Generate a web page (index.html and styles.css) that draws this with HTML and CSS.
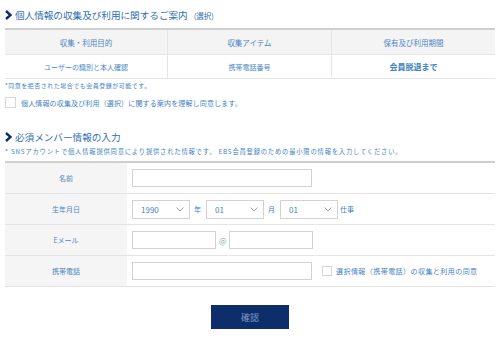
FILE: index.html
```html
<!DOCTYPE html>
<html lang="ja">
<head>
<meta charset="utf-8">
<link rel="stylesheet" href="styles.css">
</head>
<body>
<div class="page">
  <h2 class="sec-title first">
    <svg class="arrow" width="7" height="10" viewBox="0 0 7 10"><path d="M1 1 L5.5 5 L1 9" fill="none" stroke="#0d2e6b" stroke-width="2.4"/></svg>
    <span>個人情報の収集及び利用に関するご案内</span><small>(選択)</small>
  </h2>
  <div class="info-table">
    <div class="cell head">収集・利用目的</div>
    <div class="cell head">収集アイテム</div>
    <div class="cell head">保有及び利用期間</div>
    <div class="cell">ユーザーの識別と本人確認</div>
    <div class="cell">携帯電話番号</div>
    <div class="cell strong">会員脱退まで</div>
  </div>
  <p class="note n1">*同意を拒否された場合でも会員登録が可能です。</p>
  <label class="agree"><span class="box"></span><span>個人情報の収集及び利用（選択）に関する案内を理解し同意します。</span></label>

  <h2 class="sec-title second">
    <svg class="arrow" width="7" height="10" viewBox="0 0 7 10"><path d="M1 1 L5.5 5 L1 9" fill="none" stroke="#0d2e6b" stroke-width="2.4"/></svg>
    <span>必須メンバー情報の入力</span>
  </h2>
  <p class="note n2">* SNSアカウントで個人情報提供同意により提供された情報です。 EBS会員登録のための最小限の情報を入力してください。</p>
  <div class="form-table">
    <div class="row">
      <div class="label">名前</div>
      <div class="field"><span class="input w180"></span></div>
    </div>
    <div class="row">
      <div class="label">生年月日</div>
      <div class="field">
        <span class="select"><span>1990</span><svg width="8" height="5" viewBox="0 0 8 5"><path d="M0.5 0.5 L4 4 L7.5 0.5" fill="none" stroke="#9aa" stroke-width="1"/></svg></span><span class="unit">年</span>
        <span class="select"><span>01</span><svg width="8" height="5" viewBox="0 0 8 5"><path d="M0.5 0.5 L4 4 L7.5 0.5" fill="none" stroke="#9aa" stroke-width="1"/></svg></span><span class="unit">月</span>
        <span class="select"><span>01</span><svg width="8" height="5" viewBox="0 0 8 5"><path d="M0.5 0.5 L4 4 L7.5 0.5" fill="none" stroke="#9aa" stroke-width="1"/></svg></span><span class="unit">仕事</span>
      </div>
    </div>
    <div class="row">
      <div class="label">Eメール</div>
      <div class="field"><span class="input w84"></span><span class="at">@</span><span class="input w84"></span></div>
    </div>
    <div class="row">
      <div class="label">携帯電話</div>
      <div class="field"><span class="input w180"></span><span class="box small"></span><span class="opt">選択情報（携帯電話）の収集と利用の同意</span></div>
    </div>
  </div>
  <div class="actions"><button class="confirm">確認</button></div>
</div>
</body>
</html>
```
FILE: styles.css
```css
* { box-sizing: border-box; }
body { margin: 0; background: #fff; font-family: "Noto Sans CJK JP", "Noto Sans", sans-serif; color: #3a7fc0; }
.page { padding: 0 5px; width: 500px; }
.sec-title { display: flex; align-items: center; gap: 3px; margin: 0; height: 14px; font-size: 9.6px; font-weight: 400; color: #2f6eb0; }
.sec-title.first { margin-top: 8px; }
.sec-title small { font-size: 7.5px; margin-left: 3px; }
.sec-title.second { margin-top: 22px; }
.arrow { flex: none; }
.info-table { margin-top: 6px; display: grid; grid-template-columns: 163px 164px 1fr; border-top: 2px solid #cfcfcf; border-bottom: 1px solid #e6e6e6; }
.cell { display: flex; align-items: center; justify-content: center; font-size: 7px; height: 23px; color: #4a86c4; }
.cell.head { height: 25px; background: #f4f4f4; border-bottom: 1px solid #e6e6e6; font-size: 7.5px; }
.cell:nth-child(3n+1), .cell:nth-child(3n+2) { border-right: 1px solid #e6e6e6; }
.cell.strong { font-size: 8px; font-weight: 700; color: #3a7fc0; }
.note { margin: 0; font-size: 6px; color: #3f83c6; letter-spacing: 0.5px; line-height: 8px; }
.note.n1 { margin-top: 3px; }
.note.n2 { margin-top: 4px; font-size: 6.3px; letter-spacing: 0.8px; }
.agree { display: flex; align-items: center; gap: 5px; margin-top: 7px; font-size: 7px; letter-spacing: 0.15px; color: #3f83c6; }
.box { display: inline-block; width: 11px; height: 11px; border: 1px solid #d6d6d6; background: #fff; flex: none; }
.form-table { margin-top: 5px; border-top: 2px solid #cfcfcf; }
.row { display: grid; grid-template-columns: 122px 1fr; height: 31px; border-bottom: 1px solid #e4e4e4; }
.label { background: #f5f5f5; display: flex; align-items: center; justify-content: center; font-size: 7px; color: #4a86c4; }
.field { display: flex; align-items: center; padding-left: 5px; font-size: 7px; }
.input { display: inline-block; height: 18px; border: 1px solid #d2d2d2; background: #fff; }
.w180 { width: 180px; }
.w84 { width: 84px; }
.at { margin: 0 2px 0 3px; font-size: 8px; color: #8aa; }
.select { display: inline-flex; align-items: center; justify-content: space-between; width: 58px; height: 19px; border: 1px solid #d2d2d2; padding: 0 5px 0 8px; font-size: 8px; color: #4a86c4; }
.unit { margin: 0 5px 0 4px; font-size: 7px; }
.unit:last-child { margin-left: 2px; }
.box.small { margin-left: 10px; width: 10px; height: 10px; }
.opt { margin-left: 4px; font-size: 7px; letter-spacing: 0.45px; color: #3f83c6; }
.actions { display: flex; justify-content: center; margin-top: 18px; }
.confirm { width: 78px; height: 24px; background: #0d2e6b; border: none; color: #7f9cc8; font-family: "Noto Sans CJK JP", sans-serif; font-size: 9px; padding: 0; }
```
